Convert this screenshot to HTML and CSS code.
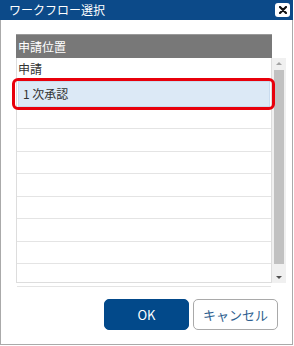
FILE: index.html
```html
<!DOCTYPE html>
<html lang="ja">
<head>
    <meta charset="UTF-8">
    <title>ワークフロー選択</title>
    <link rel="stylesheet" href="styles.css">
</head>
<body>
    <div class="dialog">
        <div class="titlebar">
            <span class="title">ワークフロー選択</span>
            <span class="close">
                <svg width="8" height="8" viewBox="0 0 8 8"><path d="M1 1L7 7M7 1L1 7" stroke="#111" stroke-width="2.2" stroke-linecap="round"/></svg>
            </span>
        </div>

        <div class="content">
            <div class="grid">
                <div class="grid-head">申請位置</div>
                <div class="grid-body">
                    <div class="rows">
                        <div class="row">申請</div>
                        <div class="row selected">1 次承認</div>
                        <div class="row"></div>
                        <div class="row"></div>
                        <div class="row"></div>
                        <div class="row"></div>
                        <div class="row"></div>
                        <div class="row"></div>
                        <div class="row"></div>
                        <div class="row"></div>
                    </div>
                    <div class="scrollbar">
                        <span class="arrow up"></span>
                        <span class="thumb"></span>
                        <span class="arrow down"></span>
                    </div>
                </div>
            </div>

            <div class="buttons">
                <button class="btn ok">OK</button>
                <button class="btn cancel">キャンセル</button>
            </div>
        </div>
    </div>
</body>
</html>
```

FILE: styles.css
```css
body {
    margin: 0;
    font-family: "Noto Sans CJK JP", "Liberation Sans", sans-serif;
    font-size: 12px;
    color: #333;
    background: #fff;
}
.dialog {
    width: 293px;
    height: 345px;
    box-sizing: border-box;
    border: 1px solid #aaa;
    border-top: none;
    background: #fff;
}
.titlebar {
    height: 20px;
    margin: 0 -1px;
    background-color: #0c4a89;
    display: flex;
    align-items: center;
    justify-content: space-between;
    padding: 0 3px 0 9px;
}
.title {
    color: #fff;
    font-size: 12px;
    line-height: 20px;
}
.close {
    width: 15px;
    height: 14px;
    background: #fff;
    border-radius: 3px;
    display: flex;
    align-items: center;
    justify-content: center;
}
.content {
    padding: 14px 0 0 15px;
}
.grid {
    width: 270px;
}
.grid-head {
    width: 256px;
    height: 24px;
    box-sizing: border-box;
    background-color: #787878;
    border-top: 1px solid #9a9a9a;
    color: #fff;
    padding-left: 2px;
    line-height: 23px;
}
.grid-body {
    display: flex;
    height: 225px;
}
.rows {
    width: 256px;
    box-sizing: border-box;
    border-left: 1px solid #ddd;
    border-right: 1px solid #ddd;
    border-bottom: 1px solid #ddd;
}
.row {
    height: 22.5px;
    box-sizing: border-box;
    border-bottom: 1px solid #e4e4e4;
    padding-left: 1px;
    line-height: 21px;
}
.row.selected {
    position: relative;
    height: 26px;
    margin: 0 1px;
    background-color: #dce9f6;
    border: 1px solid #c9dbee;
    padding-left: 4px;
    line-height: 24px;
}
.row.selected::after {
    content: "";
    position: absolute;
    left: -7px;
    right: -6px;
    top: -4px;
    bottom: -4px;
    border: 3px solid #e8000b;
    border-radius: 6px;
}
.scrollbar {
    width: 14px;
    display: flex;
    flex-direction: column;
    align-items: center;
    background: #f0f0f0;
}
.arrow {
    height: 11px;
    width: 14px;
    position: relative;
}
.arrow::before {
    content: "";
    position: absolute;
    left: 4px;
    top: 4px;
    border-left: 3px solid transparent;
    border-right: 3px solid transparent;
}
.arrow.up::before {
    border-bottom: 3px solid #a3a3a3;
}
.arrow.down::before {
    border-top: 3px solid #505050;
}
.thumb {
    flex: 1;
    width: 10px;
    margin: 1px 0 8px;
    background-color: #c1c1c1;
}
.buttons {
    display: flex;
    justify-content: flex-end;
    gap: 4px;
    padding-right: 14px;
    margin-top: 16px;
}
.btn {
    height: 31px;
    border-radius: 5px;
    font-family: "Noto Sans CJK JP", "Liberation Sans", sans-serif;
    font-size: 13px;
    cursor: pointer;
}
.ok {
    width: 85px;
    background-color: #02498a;
    border: 1px solid #02498a;
    color: #fff;
}
.cancel {
    width: 85px;
    background-color: #fff;
    border: 1px solid #a9a9a9;
    color: #2f5f90;
}
```
